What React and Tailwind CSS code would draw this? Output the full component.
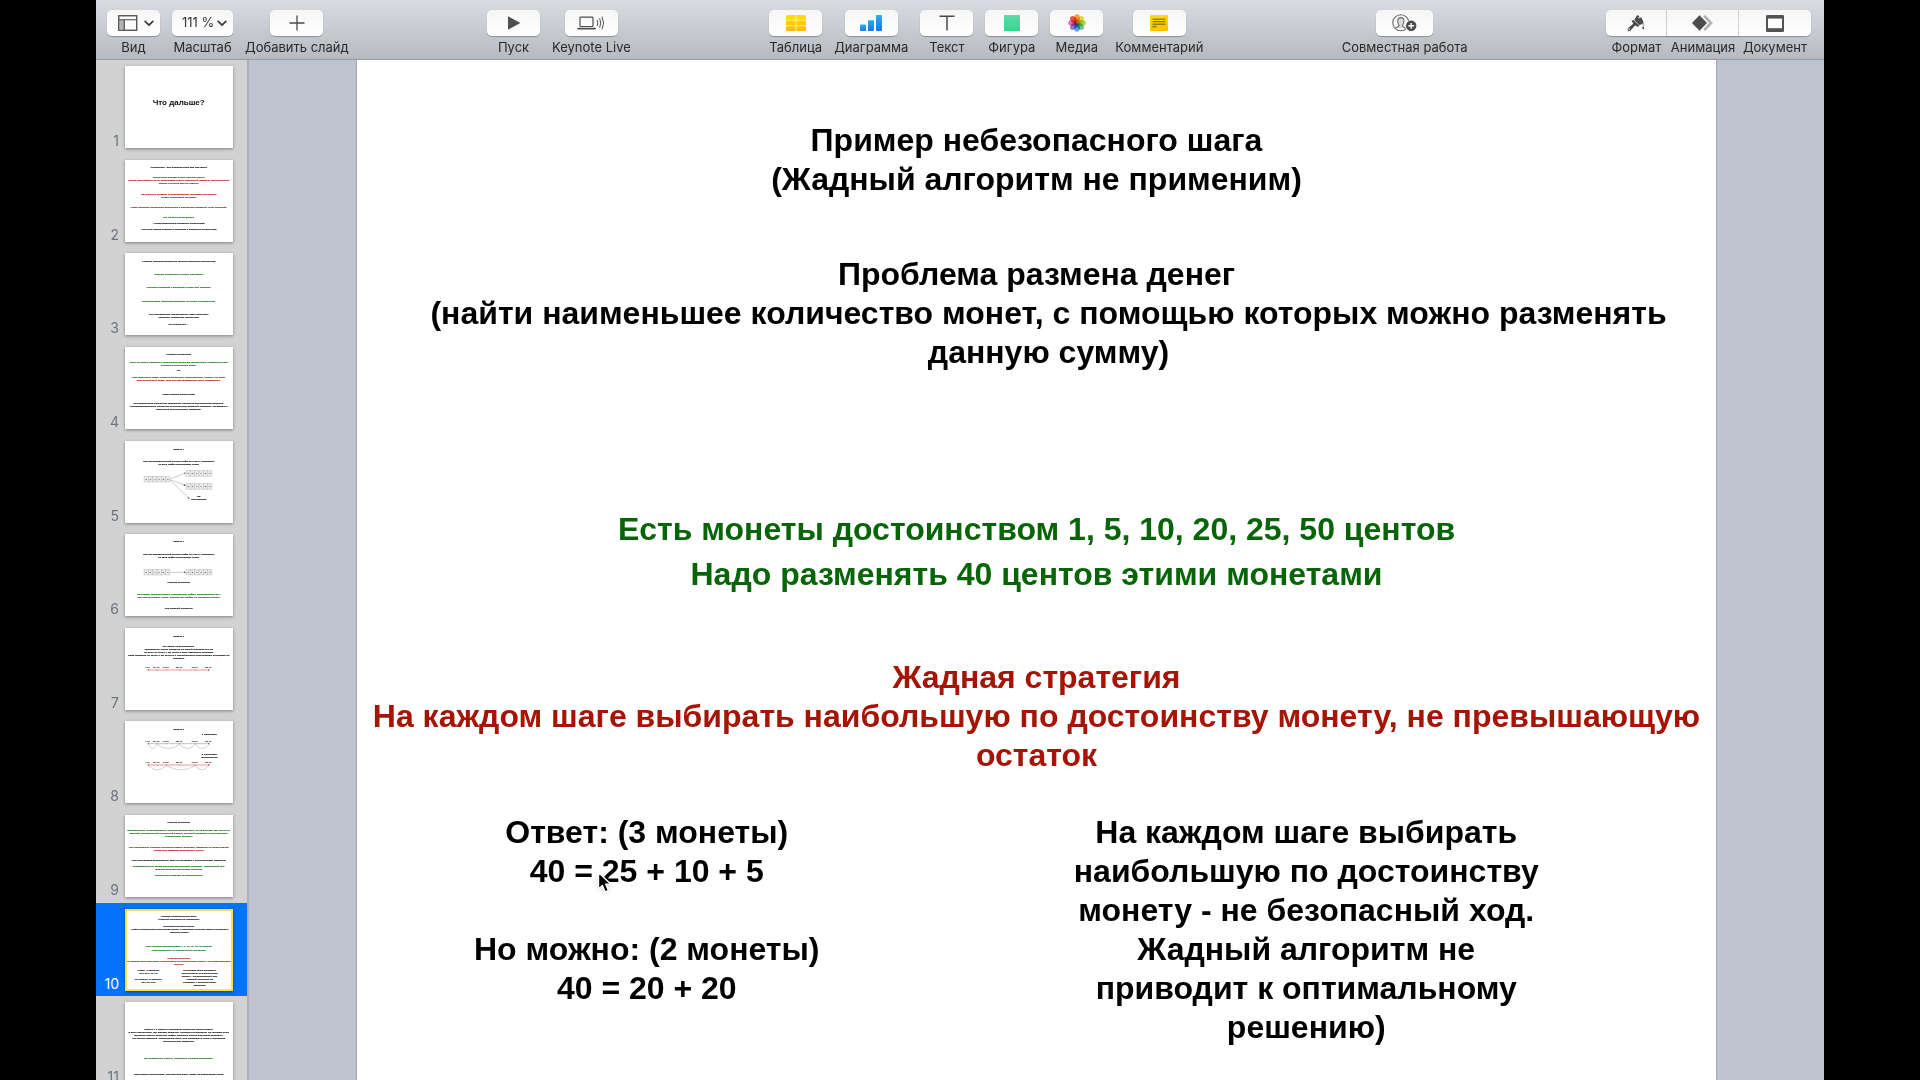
import React from "react";

const INK = "#0a0a0a";
const GREEN = "#0b6b0b";
const RED = "#a81205";

function ViewIcon() {
  return (
    <svg width="20" height="16" viewBox="0 0 20 16" fill="none" stroke="#4a4a4c">
      <rect x="1.5" y="5" width="4.5" height="9.5" fill="#b4b4b6" stroke="none" />
      <rect x="0.75" y="0.75" width="18" height="14.5" strokeWidth="1.3" />
      <path d="M1 4.75H19M6.25 4.75V15" strokeWidth="1.2" />
    </svg>
  );
}

function Chevron() {
  return (
    <svg width="10" height="7" viewBox="0 0 10 7" fill="none" stroke="#3d3d3f" strokeWidth="1.8" strokeLinecap="round" strokeLinejoin="round">
      <path d="M1.2 1.4L5 5.2L8.8 1.4" />
    </svg>
  );
}

function PlusIcon() {
  return (
    <svg width="16" height="16" viewBox="0 0 16 16" stroke="#4a4a4c" strokeWidth="1.3">
      <path d="M8 0.5V15.5M0.5 8H15.5" />
    </svg>
  );
}

function PlayIcon() {
  return (
    <svg width="14" height="14" viewBox="0 0 14 14" fill="#505052">
      <path d="M1 0.2L13.4 7L1 13.8Z" />
    </svg>
  );
}

function LiveIcon() {
  return (
    <svg width="28" height="14" viewBox="0 0 28 14" fill="none" stroke="#4f4f51" strokeWidth="1.2" strokeLinecap="round">
      <rect x="3" y="1.2" width="13" height="9.3" rx="0.8" />
      <path d="M1 12.6H18.2" strokeWidth="1.6" />
      <path d="M20.3 4.4Q21.6 7 20.3 9.6M22.8 2.6Q24.8 7 22.8 11.4M25.2 1Q28 7 25.2 13" strokeWidth="1" />
    </svg>
  );
}

function TableIcon() {
  return (
    <svg width="20" height="16" viewBox="0 0 20 16">
      <defs>
        <linearGradient id="tbl" gradientUnits="userSpaceOnUse" x1="0" y1="0" x2="0" y2="16">
          <stop offset="0" stopColor="#ffe100" />
          <stop offset="1" stopColor="#ffb800" />
        </linearGradient>
      </defs>
      <rect width="20" height="16" rx="1" fill="#fff0a0" />
      <g fill="url(#tbl)">
        <rect width="9.5" height="4.8" rx="0.8" />
        <rect x="10.4" width="9.6" height="4.8" rx="0.8" />
        <rect y="5.7" width="9.5" height="4.6" />
        <rect x="10.4" y="5.7" width="9.6" height="4.6" />
        <rect y="11.2" width="9.5" height="4.8" rx="0.8" />
        <rect x="10.4" y="11.2" width="9.6" height="4.8" rx="0.8" />
      </g>
    </svg>
  );
}

function ChartIcon() {
  return (
    <svg width="22" height="16" viewBox="0 0 22 16">
      <defs>
        <linearGradient id="bars" x1="0" y1="0" x2="0" y2="1">
          <stop offset="0" stopColor="#22b2fb" />
          <stop offset="1" stopColor="#1277ee" />
        </linearGradient>
      </defs>
      <g fill="url(#bars)">
        <rect y="9.5" width="6" height="6.5" rx="0.8" />
        <rect x="8" y="5.2" width="6" height="10.8" rx="0.8" />
        <rect x="16" width="6" height="16" rx="0.8" />
      </g>
    </svg>
  );
}

function TextIcon() {
  return (
    <svg width="16" height="16" viewBox="0 0 16 16" stroke="#4a4a4c" strokeWidth="1.5">
      <path d="M0.5 1.2H15.5M8 1.2V15.5" />
    </svg>
  );
}

function ShapeIcon() {
  return (
    <svg width="16" height="16" viewBox="0 0 16 16">
      <defs>
        <linearGradient id="shp" x1="0" y1="0" x2="0" y2="1">
          <stop offset="0" stopColor="#5fd9ae" />
          <stop offset="1" stopColor="#30d987" />
        </linearGradient>
      </defs>
      <rect width="16" height="16" rx="0.6" fill="url(#shp)" />
    </svg>
  );
}

const PETALS = [
  [0, "#ff9a1c"],
  [45, "#e8d92b"],
  [90, "#a9d13c"],
  [135, "#5fbf8a"],
  [180, "#4aa3ee"],
  [225, "#8a6fd0"],
  [270, "#d768b0"],
  [315, "#f4452f"],
];

function MediaIcon() {
  return (
    <svg width="18" height="18" viewBox="0 0 18 18">
      {PETALS.map(([angle, color]) => (
        <ellipse key={angle} cx="9" cy="4.5" rx="2.9" ry="4.3" fill={color} fillOpacity="0.92" transform={`rotate(${angle} 9 9)`} className="mix-blend-multiply" />
      ))}
    </svg>
  );
}

function CommentIcon() {
  return (
    <svg width="18" height="16" viewBox="0 0 18 16">
      <defs>
        <linearGradient id="cmt" x1="0" y1="0" x2="0" y2="1">
          <stop offset="0" stopColor="#ffdc00" />
          <stop offset="1" stopColor="#ffc000" />
        </linearGradient>
      </defs>
      <rect width="18" height="16" rx="1" fill="url(#cmt)" />
      <path d="M2.5 4.2H15.5M2.5 6.7H15.5M2.5 9.2H15.5M2.5 11.7H6.5" stroke="#5c4a00" strokeWidth="0.9" />
    </svg>
  );
}

function CollaborateIcon() {
  return (
    <svg width="25" height="18" viewBox="0 0 25 18" fill="none">
      <circle cx="8.8" cy="8.8" r="8" stroke="#6a6a6c" strokeWidth="1.1" />
      <path
        d="M3.4 14.4C4.4 13 7 13 7.1 11.8C7.1 10.7 5.7 9.8 5.7 7C5.7 4.8 7 3.6 8.8 3.6S11.9 4.8 11.9 7C11.9 9.8 10.5 10.7 10.5 11.8C10.6 13 12 13 13.6 14.2"
        fill="#dcdcde"
        stroke="#6a6a6c"
        strokeWidth="1.1"
      />
      <circle cx="19.2" cy="11.8" r="5.9" fill="#f8f8f8" />
      <circle cx="19.2" cy="11.8" r="5.2" fill="#4b4b4d" />
      <path d="M19.2 8.9V14.7M16.3 11.8H22.1" stroke="#fff" strokeWidth="1.4" />
    </svg>
  );
}

function FormatIcon() {
  return (
    <svg width="18" height="18" viewBox="0 0 18 18" fill="#4d4d4f">
      <path d="M7.2 6L10.2 0.9L12.4 2.2L11 4.6L14.2 3.2L16.4 7.4V12.4Q17.9 14.6 16.3 15.2Q14.6 14.8 15.8 12.4V9.6L12.4 11.2Z" />
      <path d="M4.6 6.6L6.4 6L12.2 11.6L11.2 13L8 11.4L3.6 16.4Q1.8 17.8 0.7 16.5Q0 15 1.6 13.8L6.2 9.8Z" />
      <circle cx="2.2" cy="15.3" r="0.8" fill="#f8f8f8" />
    </svg>
  );
}

function AnimateIcon() {
  return (
    <svg width="21" height="16" viewBox="0 0 21 16">
      <path d="M12.2 0.8L19 8L12.2 15.2" fill="none" stroke="#b2b2b4" strokeWidth="2.6" />
      <path d="M7.5 0.3L15 8L7.5 15.7L0 8Z" fill="#4d4d4f" />
    </svg>
  );
}

function DocumentIcon() {
  return (
    <svg width="18" height="17" viewBox="0 0 18 17">
      <rect width="18" height="17" rx="1.2" fill="#545456" />
      <rect x="2" y="3.6" width="14" height="9.6" fill="#fff" />
    </svg>
  );
}

const BTN = "flex h-[26px] items-center justify-center rounded-[5px] bg-linear-to-b from-[#f6f6f6] to-white shadow-[0_1px_1px_rgba(0,0,0,0.28)]";
const LABEL = "whitespace-nowrap text-[13px] leading-4 text-[#29292c]";

function Tool({ id, label, size = "w-[53px]", children }) {
  return (
    <div className="flex flex-col items-center gap-[3px]">
      <button id={id} type="button" className={`${BTN} gap-1.5 ${size}`}>
        {children}
      </button>
      <label htmlFor={id} className={LABEL}>
        {label}
      </label>
    </div>
  );
}

function Segment({ id, label, box, button, children }) {
  return (
    <div className={`flex flex-col items-center gap-[3px] ${box}`}>
      <button id={id} type="button" className={`flex h-[26px] w-full items-center justify-center bg-linear-to-b from-[#f6f6f6] to-white shadow-[0_1px_1px_rgba(0,0,0,0.28)] ${button}`}>
        {children}
      </button>
      <label htmlFor={id} className={LABEL}>
        {label}
      </label>
    </div>
  );
}

function Toolbar() {
  return (
    <header className="flex h-15 shrink-0 items-start justify-between border-b border-[#97999e] bg-linear-to-b from-[#d8dbdf] to-[#b7babe] pt-[10px] pr-[13px] pl-[11px]">
      <div className="flex gap-3">
        <Tool id="view" label="Вид" size="w-[53px] pl-1">
          <ViewIcon />
          <Chevron />
        </Tool>
        <div className="flex flex-col items-center gap-[3px]">
          <div className="relative w-[61px]">
            <select id="zoom" defaultValue="111" className={`${BTN} w-full appearance-none pl-[10px] text-[13px] text-[#333335]`}>
              <option value="111">111 %</option>
            </select>
            <span className="pointer-events-none absolute inset-y-0 right-1.5 flex items-center">
              <Chevron />
            </span>
          </div>
          <label htmlFor="zoom" className={LABEL}>
            Масштаб
          </label>
        </div>
        <Tool id="add" label="Добавить слайд">
          <PlusIcon />
        </Tool>
      </div>
      <div className="flex gap-3">
        <Tool id="play" label="Пуск">
          <PlayIcon />
        </Tool>
        <Tool id="live" label="Keynote Live">
          <LiveIcon />
        </Tool>
      </div>
      <div className="flex gap-3">
        <Tool id="table" label="Таблица">
          <TableIcon />
        </Tool>
        <Tool id="chart" label="Диаграмма">
          <ChartIcon />
        </Tool>
        <Tool id="text" label="Текст">
          <TextIcon />
        </Tool>
        <Tool id="shape" label="Фигура">
          <ShapeIcon />
        </Tool>
        <Tool id="media" label="Медиа">
          <MediaIcon />
        </Tool>
        <Tool id="comment" label="Комментарий">
          <CommentIcon />
        </Tool>
      </div>
      <Tool id="collab" label="Совместная работа" size="w-[57px]">
        <CollaborateIcon />
      </Tool>
      <div className="flex">
        <Segment id="format" label="Формат" box="w-[61px]" button="rounded-l-[5px] border-r border-[#d9d9db]">
          <FormatIcon />
        </Segment>
        <Segment id="animate" label="Анимация" box="w-[72px]" button="border-r border-[#d9d9db]">
          <AnimateIcon />
        </Segment>
        <Segment id="document" label="Документ" box="w-[72px]" button="rounded-r-[5px]">
          <DocumentIcon />
        </Segment>
      </div>
    </header>
  );
}

/* Preview texts: [centre x, centre y, text, colour] on a 324 × 246 canvas. */
const PREVIEWS = [
  [],
  [
    [161, 23, "Алгоритмы - это сложная тема для обучения"],
    [161, 53, "Алгоритмы решают очень разные задачи", RED],
    [161, 62, "(поиск кратчайшего пути, сортировка чисел, машинный перевод, компьютерное", RED],
    [161, 71, "зрение и многие другие задачи)", RED],
    [161, 102, "Нет единого способа «придумывания» хорошего алгоритма", RED],
    [161, 111, "(очень творческий процесс)", RED],
    [161, 141, "Часто хорошие алгоритмы возникают в результате озарения (Aha! moments)", RED],
    [161, 171, "Как же научиться этому?", GREEN],
    [161, 190, "- Практиковаться в создании алгоритмов"],
    [161, 208, "- Изучить общие техники и подходы к созданию алгоритмов"],
  ],
  [
    [161, 24, "3 самые распространенные техники создания алгоритмов"],
    [161, 64, "Жадные алгоритмы (Greedy algorithms)", GREEN],
    [161, 104, "Принцип Разделяй и властвуй (Divide and Conquer)", GREEN],
    [161, 145, "Динамическое программирование (Dynamic Programming)", GREEN],
    [161, 184, "Эти стандартные инструменты часто помогают"],
    [161, 193, "ускорить «наивные» алгоритмы"],
    [161, 215, "Но иногда нет ..."],
  ],
  [
    [161, 21, "Жадные алгоритмы"],
    [161, 45, "Одни из самых простых и интуитивно понятных алгоритмов. Применимы для", GREEN],
    [161, 54, "большого количества задач.", GREEN],
    [161, 71, "НО"],
    [161, 90, "Для некоторых задач Жадные алгоритмы неприменимы, потому что дают", RED],
    [161, 99, "неоптимальный ответ. Этот случай необходимо четко определить.", RED],
    [161, 143, "Идея жадных алгоритмов"],
    [161, 168, "На каждом шаге алгоритма совершать локально оптимальное решение."],
    [161, 177, "Последовательность локально оптимальных решений приводит (не всегда) к"],
    [161, 186, "глобально оптимальному решению."],
  ],
  [
    [161, 24, "Задача 1"],
    [161, 61, "Дан неупорядоченный список цифр от 0 до 9. Составить"],
    [161, 70, "из этих цифр наибольшее число"],
    [221, 166, "НЕ"],
    [221, 176, "наибольшее"],
  ],
  [
    [161, 22, "Задача 1"],
    [161, 61, "Дан неупорядоченный список цифр от 0 до 9. Составить"],
    [161, 70, "из этих цифр наибольшее число"],
    [161, 146, "Жадная стратегия"],
    [161, 181, "На каждом шаге выбирать наибольшую цифру, присоединять ее к", GREEN],
    [161, 190, "результирующему числу, удалять эту цифру из исходного списка", GREEN],
    [161, 223, "Это жадный алгоритм"],
  ],
  [
    [161, 24, "Задача 2"],
    [161, 54, "Вы едете на автомобиле."],
    [161, 63, "Автомобиль может проехать на одной заправке 400 км"],
    [161, 72, "На пути от точки А до точки В есть несколько заправок"],
    [161, 81, "Надо проехать от точки А до точки В с минимальным количеством остановок на"],
    [161, 90, "заправку"],
  ],
  [
    [161, 24, "Задача 2"],
    [253, 40, "3 остановки"],
    [253, 101, "2 остановки"],
    [253, 109, "(оптимально)"],
  ],
  [
    [161, 21, "Жадная стратегия"],
    [161, 47, "Заправляться на бензостоянке, которая дальше всех, но не дальше чем 400 км от", GREEN],
    [161, 56, "текущей (оптимальный локальный выбор, который приведет к оптимальному", GREEN],
    [161, 65, "глобальному выбору)", GREEN],
    [161, 96, "При построении Жадного алгоритма важно доказать, является ли наше жадное", RED],
    [161, 105, "локальное решение безопасным шагом", RED],
    [161, 136, "Шаг называется безопасным, если он приводит к оптимальному решению"],
    [161, 154, "Заправляться на самой дальней достижимой заправке - безопасный шаг", GREEN],
    [161, 163, "(доказательство исключаем наличие)", GREEN],
    [161, 181, "Иногда шаги бывают не безопасными", RED],
  ],
  [
    [161, 21, "Пример небезопасного шага"],
    [161, 30, "(Жадный алгоритм не применим)"],
    [161, 53, "Проблема размена денег"],
    [164, 62, "(найти наименьшее количество монет, с помощью которых можно разменять"],
    [164, 71, "данную сумму)"],
    [161, 112, "Есть монеты достоинством 1, 5, 10, 20, 25, 50 центов", GREEN],
    [161, 123, "Надо разменять 40 центов этими монетами", GREEN],
    [161, 147, "Жадная стратегия", RED],
    [161, 156, "На каждом шаге выбирать наибольшую по достоинству монету, не превышающую", RED],
    [161, 165, "остаток", RED],
    [70, 184, "Ответ: (3 монеты)"],
    [70, 193, "40 = 25 + 10 + 5"],
    [70, 211, "Но можно: (2 монеты)"],
    [70, 220, "40 = 20 + 20"],
    [224, 184, "На каждом шаге выбирать"],
    [224, 193, "наибольшую по достоинству"],
    [224, 202, "монету - не безопасный ход."],
    [224, 211, "Жадный алгоритм не"],
    [224, 220, "приводит к оптимальному"],
    [224, 229, "решению)"],
  ],
  [
    [161, 83, "Задача 1 и Задача 2 решаются похожими алгоритмами."],
    [161, 92, "В этих алгоритмах, мы делаем решения, которые оптимальны на текущем шаге"],
    [161, 101, "(выбрать самую большую цифру, выбрать самую дальнюю заправку)."],
    [161, 110, "Так как эти решения - безопасные шаги, они приводят в итоге к глобально"],
    [161, 119, "оптимальному решению."],
    [161, 169, "Мы решаем эти задачи, используя Жадные алгоритмы.", GREEN],
    [161, 218, "Реализация алгоритмов - попробуйте сами, будет на следующем уроке"],
  ],
];

function Cells({ x, y, digits }) {
  return (
    <g>
      {digits.split("").map((d, i) => (
        <g key={i}>
          <rect x={x + i * 13} y={y} width="13" height="17" fill="#e9e9e9" stroke="#a9a9a9" />
          <text x={x + i * 13 + 6.5} y={y + 11} fontSize="7" textAnchor="middle" fill="#333">
            {d}
          </text>
        </g>
      ))}
    </g>
  );
}

const STOPS = [
  [70, "0 км"],
  [96, "200 км"],
  [124, "375 км"],
  [164, "550 км"],
  [211, "750 км"],
  [251, "950 км"],
];

function Road({ y, arcs, pale }) {
  return (
    <g>
      {STOPS.map(([x, t]) => (
        <text key={t} x={x - 2} y={y - 5} fontSize="6" textAnchor="middle" fill={INK}>
          {t}
        </text>
      ))}
      <path d={`M70 ${y}H253`} stroke={pale ? "#f6b9b9" : "#ee8585"} strokeWidth={pale ? 4 : 2} />
      {arcs.map(([a, b]) => (
        <path key={a} d={`M${a} ${y + 2}Q${(a + b) / 2} ${y + 27} ${b} ${y + 2}`} fill="none" stroke="#777" strokeWidth="1" />
      ))}
      {STOPS.map(([x], i) => (
        <circle key={x} cx={x} cy={y} r="2" fill={i === 0 || i === 5 ? "#c8251f" : "#8fa4d8"} />
      ))}
    </g>
  );
}

function Drawing({ number }) {
  if (number === 5)
    return (
      <g>
        <Cells x={57} y={106} digits="337980" />
        <Cells x={183} y={89} digits="337980" />
        <Cells x={183} y={128} digits="837980" />
        <path d="M136 114L181 96M136 116L181 133M136 118L192 172" stroke="#666" strokeWidth="1" />
        <path d="M183 95L177 95L179 100ZM183 134L177 129L176 135ZM194 174L191 168L187 171Z" fill="#555" />
      </g>
    );
  if (number === 6)
    return (
      <g>
        <Cells x={57} y={106} digits="337980" />
        <Cells x={183} y={106} digits="987330" />
        <path d="M136 115H179" stroke="#666" strokeWidth="1" />
        <path d="M183 115L177 112V118Z" fill="#555" />
      </g>
    );
  if (number === 7) return <Road y={126} arcs={[]} pale />;
  if (number === 8)
    return (
      <g>
        <Road y={68} arcs={[[70, 96], [96, 164], [164, 211], [211, 253]]} />
        <Road y={132} arcs={[[70, 124], [124, 211], [211, 251]]} pale />
      </g>
    );
  return null;
}

function Preview({ number, lines }) {
  return (
    <svg viewBox="0 0 324 246" className="block h-[82px] w-[108px] bg-white" fontWeight="700" fontSize="7.6" fontFamily='"Liberation Sans", Arial, sans-serif'>
      {number === 1 && (
        <text x="161" y="118" fontSize="24" textAnchor="middle" fill={INK}>
          Что дальше?
        </text>
      )}
      {lines.map(([x, y, text, color]) => (
        <text key={`${x}-${y}`} x={x} y={y + 2} textAnchor="middle" fill={color || INK} stroke={color || INK} strokeWidth="0.3">
          {text}
        </text>
      ))}
      <Drawing number={number} />
    </svg>
  );
}

function Navigator() {
  const selected = 10;
  return (
    <nav className="w-[153px] shrink-0 overflow-hidden border-r-2 border-[#aab0bd] bg-[#d2d2d2]">
      <ol className="grid h-[1030px] auto-rows-fr">
        {PREVIEWS.map((lines, i) => {
          const number = i + 1;
          const active = number === selected;
          return (
            <li key={number} className={active ? "bg-[#0572fb]" : ""}>
              <button type="button" className="flex w-full items-end pt-[6px] pl-[3px]">
                <span className={`w-5 text-right text-[14px] leading-[14px] ${active ? "text-white" : "text-[#6b7482]"}`}>{number}</span>
                <span className={`ml-1.5 shadow-[0_1px_3px_rgba(0,0,0,0.4)] ${active ? "outline-2 -outline-offset-2 outline-[#fbdf4b]" : ""}`}>
                  <Preview number={number} lines={lines} />
                </span>
              </button>
            </li>
          );
        })}
      </ol>
    </nav>
  );
}

function Slide() {
  return (
    <article className="min-h-full bg-white px-3 pt-[61px] text-center font-['Liberation_Sans',Arial,sans-serif] text-[32px] leading-[39px] font-bold text-black shadow-[0_0_2px_rgba(0,0,0,0.4)]">
      <h1>
        Пример небезопасного шага
        <br />
        (Жадный алгоритм не применим)
      </h1>
      <h2 className="mt-14">Проблема размена денег</h2>
      <p className="pl-6">
        (найти наименьшее количество монет, с помощью которых можно разменять
        <br />
        данную сумму)
      </p>
      <p className="mt-[135px] leading-[45px] text-[#076407]">
        Есть монеты достоинством 1, 5, 10, 20, 25, 50 центов
        <br />
        Надо разменять 40 центов этими монетами
      </p>
      <p className="mt-[61px] text-[#a51405]">
        Жадная стратегия
        <br />
        На каждом шаге выбирать наибольшую по достоинству монету, не превышающую
        <br />
        остаток
      </p>
      <div className="mt-[38px] grid grid-cols-2 gap-40 pr-37 pl-7">
        <div>
          <p>
            Ответ: (3 монеты)
            <br />
            40 = 25 + 10 + 5
          </p>
          <p className="mt-[39px]">
            Но можно: (2 монеты)
            <br />
            40 = 20 + 20
          </p>
        </div>
        <p>
          На каждом шаге выбирать
          <br />
          наибольшую по достоинству
          <br />
          монету - не безопасный ход.
          <br />
          Жадный алгоритм не
          <br />
          приводит к оптимальному
          <br />
          решению)
        </p>
      </div>
    </article>
  );
}

function Cursor() {
  return (
    <svg className="pointer-events-none absolute top-[871px] left-[597px] drop-shadow-sm" width="16" height="24" viewBox="0 0 16 24">
      <path d="M1.5 1.5V18L5.4 14.4L8.2 21L11.4 19.6L8.7 13.2H14Z" fill="#000" stroke="#fff" strokeWidth="1.4" strokeLinejoin="round" />
    </svg>
  );
}

export default function App() {
  return (
    <div className="relative h-screen overflow-hidden bg-black px-24 font-['Inter',sans-serif]">
      <div className="flex h-full flex-col">
        <Toolbar />
        <div className="flex min-h-0 flex-1">
          <Navigator />
          <main className="min-w-0 flex-1 overflow-hidden bg-[#bec4d0] px-27">
            <Slide />
          </main>
        </div>
      </div>
      <Cursor />
    </div>
  );
}
